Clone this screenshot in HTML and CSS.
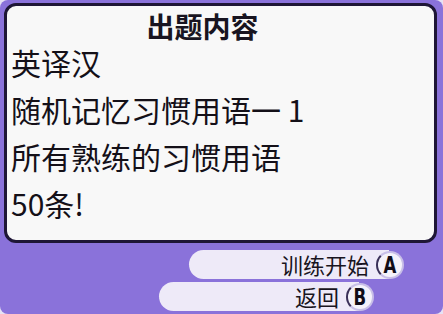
FILE: index.html
```html
<!DOCTYPE html>
<html lang="zh">
<head>
<meta charset="utf-8">
<link rel="stylesheet" href="styles.css">
</head>
<body>
<div class="screen">
  <div class="panel">
    <div class="title">出题内容</div>
    <div class="line">英译汉</div>
    <div class="line">随机记忆习惯用语一 1</div>
    <div class="line">所有熟练的习惯用语</div>
    <div class="line">50条!</div>
  </div>
  <div class="actions">
    <div class="btn-row row-a">
      <div class="pill">训练开始</div>
      <div class="key"><span class="key-letter">A</span></div>
    </div>
    <div class="btn-row row-b">
      <div class="pill">返回</div>
      <div class="key"><span class="key-letter">B</span></div>
    </div>
  </div>
</div>
</body>
</html>
```

FILE: styles.css
```css
html, body {
  margin: 0;
  padding: 0;
  background: #e6e2f4;
}

.screen {
  width: 443px;
  height: 314px;
  box-sizing: border-box;
  background: #8a72da;
  border-radius: 8px;
  padding: 3px 6px 0 4px;
  overflow: hidden;
  font-family: "Noto Sans CJK SC", "Noto Sans", sans-serif;
  color: #141018;
}

.panel {
  height: 240px;
  box-sizing: border-box;
  background: #f8f8f8;
  border: 3px solid #1e1636;
  border-radius: 12px;
  padding: 0 0 0 4px;
}

.title {
  text-align: center;
  font-size: 28px;
  font-weight: bold;
  line-height: 22px;
  padding-top: 9px;
  padding-bottom: 2px;
  margin-right: 40px;
  color: #181420;
}

.line {
  font-size: 30px;
  line-height: 47px;
  height: 47px;
  white-space: nowrap;
}

.actions {
  display: flex;
  flex-direction: column;
  align-items: flex-end;
  gap: 3px;
  padding-top: 7px;
}

.btn-row {
  display: flex;
  align-items: center;
}

.row-a {
  margin-right: 33px;
}

.row-b {
  margin-right: 63px;
}

.pill {
  width: 200px;
  height: 29px;
  box-sizing: border-box;
  background: #eeeaf8;
  border-radius: 15px 0 0 15px;
  text-align: right;
  font-size: 22px;
  line-height: 29px;
  padding-right: 20px;
  color: #181420;
}

.key {
  width: 28px;
  height: 28px;
  box-sizing: border-box;
  margin-left: -13px;
  border-radius: 50%;
  background: #f4f2fa;
  border: 2px solid #c8bfe8;
  border-left-color: #3a3058;
  display: flex;
  align-items: center;
  justify-content: center;
}

.key-letter {
  display: block;
  font-family: "DejaVu Sans", sans-serif;
  font-weight: bold;
  font-size: 23px;
  line-height: 22px;
  color: #100c18;
  transform: scaleX(0.72);
}
```
